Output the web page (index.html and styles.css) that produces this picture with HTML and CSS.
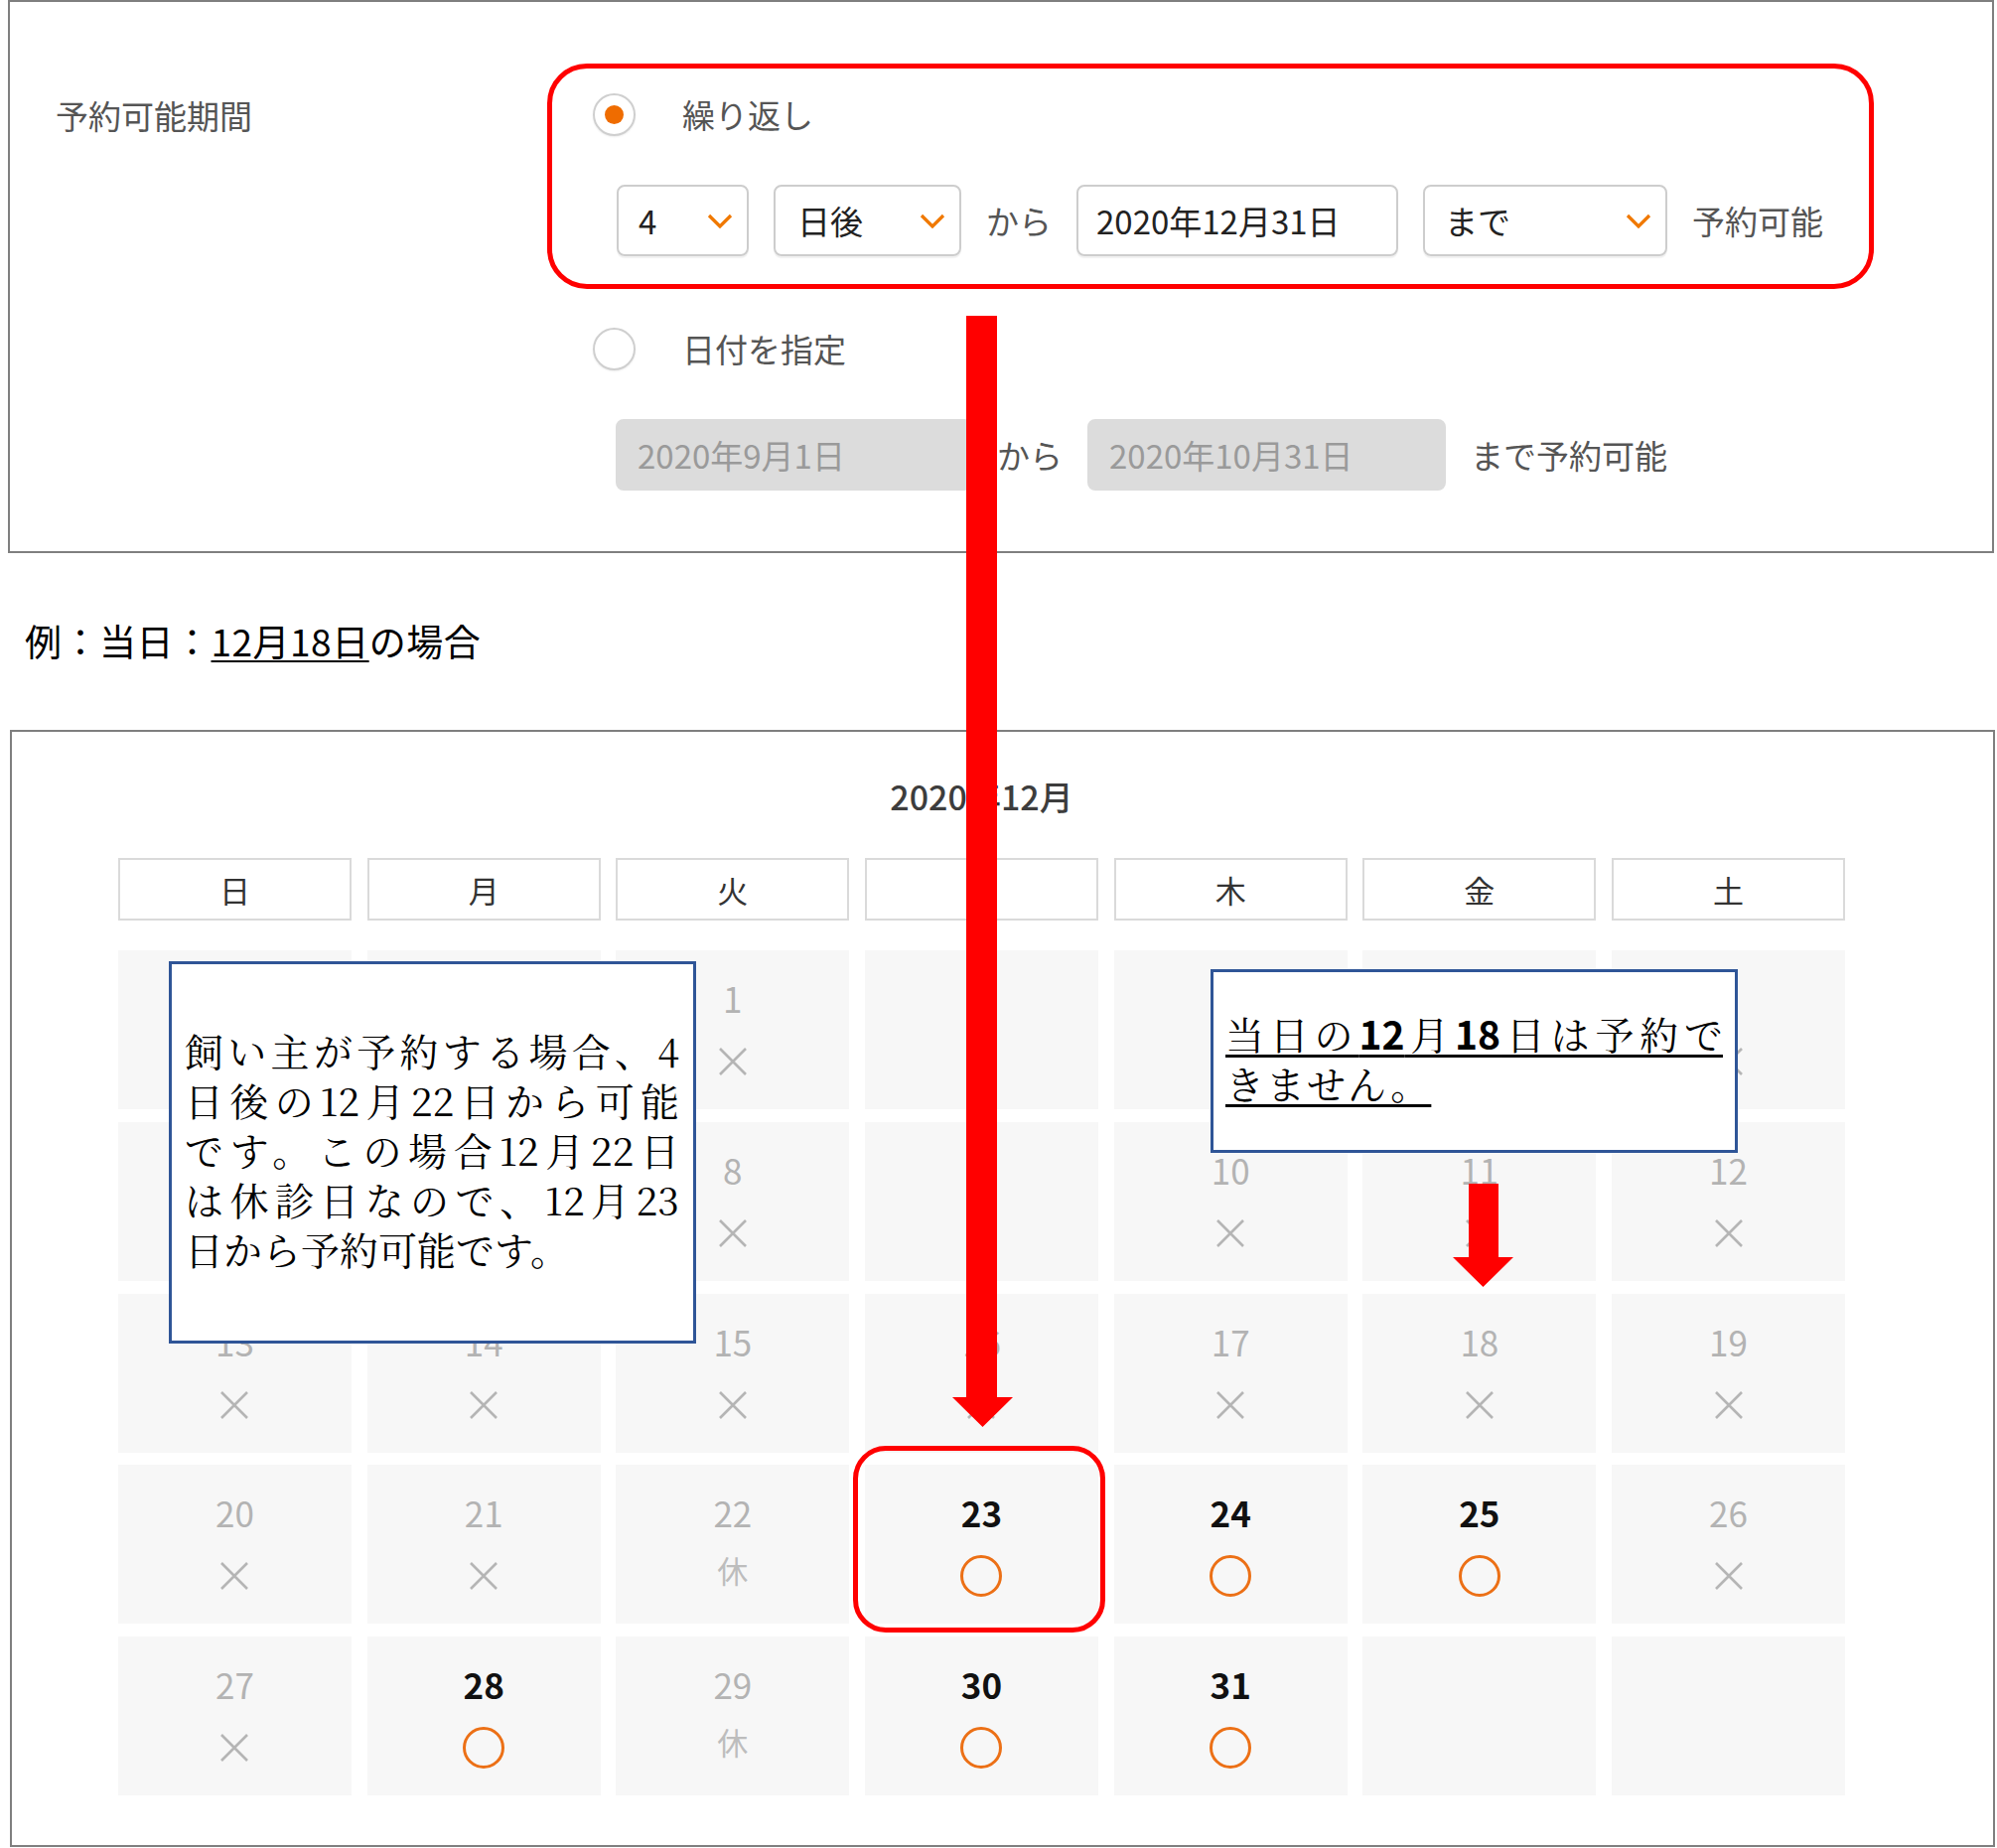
FILE: index.html
```html
<!DOCTYPE html>
<html lang="ja">
<head>
<meta charset="utf-8">
<title>予約可能期間</title>
<link rel="stylesheet" href="styles.css">
</head>
<body>
<div class="page">
  <section class="period-panel">
    <div class="field-label">予約可能期間</div>
    <div class="options">
      <div class="radio-row">
        <span class="radio checked"></span><span class="radio-text">繰り返し</span>
      </div>
      <div class="control-row r1">
        <div class="select w-num"><span>4</span><svg class="chev" viewBox="0 0 26 15"><path d="M2 2L13 13L24 2"/></svg></div>
        <div class="select w-unit"><span>日後</span><svg class="chev" viewBox="0 0 26 15"><path d="M2 2L13 13L24 2"/></svg></div>
        <span class="ctext">から</span>
        <div class="input w-date">2020年12月31日</div>
        <div class="select w-until"><span>まで</span><svg class="chev" viewBox="0 0 26 15"><path d="M2 2L13 13L24 2"/></svg></div>
        <span class="ctext">予約可能</span>
      </div>
      <div class="radio-row second">
        <span class="radio"></span><span class="radio-text">日付を指定</span>
      </div>
      <div class="control-row r2">
        <div class="input disabled w-d1">2020年9月1日</div>
        <span class="ctext">から</span>
        <div class="input disabled w-d2">2020年10月31日</div>
        <span class="ctext">まで予約可能</span>
      </div>
    </div>
  </section>

  <p class="example">例：当日：<u>12月18日</u>の場合</p>

  <section class="calendar-panel">
    <h2 class="cal-title">2020年12月</h2>
    <div class="cal-head">
      <div>日</div><div>月</div><div>火</div><div>水</div><div>木</div><div>金</div><div>土</div>
    </div>
    <div class="cal-days">
      <div class="day"></div>
      <div class="day"></div>
      <div class="day"><span class="num">1</span><span class="mark"><svg class="x" viewBox="0 0 30 30"><path d="M2 2L28 28M28 2L2 28"/></svg></span></div>
      <div class="day"><span class="num">2</span><span class="mark"><svg class="x" viewBox="0 0 30 30"><path d="M2 2L28 28M28 2L2 28"/></svg></span></div>
      <div class="day"><span class="num">3</span><span class="mark"><svg class="x" viewBox="0 0 30 30"><path d="M2 2L28 28M28 2L2 28"/></svg></span></div>
      <div class="day"><span class="num">4</span><span class="mark"><svg class="x" viewBox="0 0 30 30"><path d="M2 2L28 28M28 2L2 28"/></svg></span></div>
      <div class="day"><span class="num">5</span><span class="mark"><svg class="x" viewBox="0 0 30 30"><path d="M2 2L28 28M28 2L2 28"/></svg></span></div>

      <div class="day"><span class="num">6</span><span class="mark"><svg class="x" viewBox="0 0 30 30"><path d="M2 2L28 28M28 2L2 28"/></svg></span></div>
      <div class="day"><span class="num">7</span><span class="mark"><svg class="x" viewBox="0 0 30 30"><path d="M2 2L28 28M28 2L2 28"/></svg></span></div>
      <div class="day"><span class="num">8</span><span class="mark"><svg class="x" viewBox="0 0 30 30"><path d="M2 2L28 28M28 2L2 28"/></svg></span></div>
      <div class="day"><span class="num">9</span><span class="mark"><svg class="x" viewBox="0 0 30 30"><path d="M2 2L28 28M28 2L2 28"/></svg></span></div>
      <div class="day"><span class="num">10</span><span class="mark"><svg class="x" viewBox="0 0 30 30"><path d="M2 2L28 28M28 2L2 28"/></svg></span></div>
      <div class="day"><span class="num">11</span><span class="mark"><svg class="x" viewBox="0 0 30 30"><path d="M2 2L28 28M28 2L2 28"/></svg></span></div>
      <div class="day"><span class="num">12</span><span class="mark"><svg class="x" viewBox="0 0 30 30"><path d="M2 2L28 28M28 2L2 28"/></svg></span></div>

      <div class="day"><span class="num">13</span><span class="mark"><svg class="x" viewBox="0 0 30 30"><path d="M2 2L28 28M28 2L2 28"/></svg></span></div>
      <div class="day"><span class="num">14</span><span class="mark"><svg class="x" viewBox="0 0 30 30"><path d="M2 2L28 28M28 2L2 28"/></svg></span></div>
      <div class="day"><span class="num">15</span><span class="mark"><svg class="x" viewBox="0 0 30 30"><path d="M2 2L28 28M28 2L2 28"/></svg></span></div>
      <div class="day"><span class="num">16</span><span class="mark"><svg class="x" viewBox="0 0 30 30"><path d="M2 2L28 28M28 2L2 28"/></svg></span></div>
      <div class="day"><span class="num">17</span><span class="mark"><svg class="x" viewBox="0 0 30 30"><path d="M2 2L28 28M28 2L2 28"/></svg></span></div>
      <div class="day"><span class="num">18</span><span class="mark"><svg class="x" viewBox="0 0 30 30"><path d="M2 2L28 28M28 2L2 28"/></svg></span></div>
      <div class="day"><span class="num">19</span><span class="mark"><svg class="x" viewBox="0 0 30 30"><path d="M2 2L28 28M28 2L2 28"/></svg></span></div>

      <div class="day"><span class="num">20</span><span class="mark"><svg class="x" viewBox="0 0 30 30"><path d="M2 2L28 28M28 2L2 28"/></svg></span></div>
      <div class="day"><span class="num">21</span><span class="mark"><svg class="x" viewBox="0 0 30 30"><path d="M2 2L28 28M28 2L2 28"/></svg></span></div>
      <div class="day"><span class="num">22</span><span class="mark rest">休</span></div>
      <div class="day ok"><span class="num">23</span><span class="mark"><svg class="o" viewBox="0 0 42 42"><circle cx="21" cy="21" r="19.5"/></svg></span></div>
      <div class="day ok"><span class="num">24</span><span class="mark"><svg class="o" viewBox="0 0 42 42"><circle cx="21" cy="21" r="19.5"/></svg></span></div>
      <div class="day ok"><span class="num">25</span><span class="mark"><svg class="o" viewBox="0 0 42 42"><circle cx="21" cy="21" r="19.5"/></svg></span></div>
      <div class="day"><span class="num">26</span><span class="mark"><svg class="x" viewBox="0 0 30 30"><path d="M2 2L28 28M28 2L2 28"/></svg></span></div>

      <div class="day"><span class="num">27</span><span class="mark"><svg class="x" viewBox="0 0 30 30"><path d="M2 2L28 28M28 2L2 28"/></svg></span></div>
      <div class="day ok"><span class="num">28</span><span class="mark"><svg class="o" viewBox="0 0 42 42"><circle cx="21" cy="21" r="19.5"/></svg></span></div>
      <div class="day"><span class="num">29</span><span class="mark rest">休</span></div>
      <div class="day ok"><span class="num">30</span><span class="mark"><svg class="o" viewBox="0 0 42 42"><circle cx="21" cy="21" r="19.5"/></svg></span></div>
      <div class="day ok"><span class="num">31</span><span class="mark"><svg class="o" viewBox="0 0 42 42"><circle cx="21" cy="21" r="19.5"/></svg></span></div>
      <div class="day"></div>
      <div class="day"></div>
    </div>
  </section>

  <div class="note note-a">
    <div class="jl">飼い主が予約する場合、4</div>
    <div class="jl">日後の12月22日から可能</div>
    <div class="jl">です。この場合12月22日</div>
    <div class="jl">は休診日なので、12月23</div>
    <div class="last">日から予約可能です。</div>
  </div>

  <div class="note note-b">
    <div class="jl ul">当日の<b>12</b>月<b>18</b>日は予約で</div>
    <div class="ul last2">きません。</div>
  </div>

  <div class="hl-box hl-repeat"></div>
  <div class="hl-box hl-day"></div>

  <svg class="arrow arrow-main" viewBox="0 0 61 1119"><polygon points="14,0 45,0 45,1089 61,1089 30.5,1119 0,1089 14,1089"/></svg>
  <svg class="arrow arrow-small" viewBox="0 0 61 104"><polygon points="16,0 46,0 46,74 61,74 30.5,104 0,74 16,74"/></svg>
</div>
</body>
</html>
```

FILE: styles.css
```css
html, body {
  margin: 0;
  padding: 0;
  background: #ffffff;
}

body {
  font-family: "Noto Sans CJK JP", "Noto Sans", sans-serif;
}

.page {
  position: relative;
  width: 2011px;
  height: 1861px;
  overflow: hidden;
}

/* ---------- period panel ---------- */
.period-panel {
  box-sizing: border-box;
  margin-left: 8px;
  width: 2000px;
  height: 557px;
  border: 2px solid #7f7f7f;
  padding-left: 46px;
  display: flex;
}

.field-label {
  width: 541px;
  flex: none;
  padding-top: 92px;
  font-size: 33px;
  line-height: 44px;
  color: #555555;
}

.options {
  padding-top: 91px;
  display: flex;
  flex-direction: column;
}

.radio-row {
  display: flex;
  align-items: center;
  height: 44px;
}

.radio-row.second {
  margin-top: 71px;
}

.radio {
  box-sizing: border-box;
  width: 43px;
  height: 43px;
  border: 2px solid #cfcfcf;
  border-radius: 50%;
  display: flex;
  align-items: center;
  justify-content: center;
  box-shadow: 0 1px 2px rgba(0, 0, 0, 0.08);
}

.radio.checked::after {
  content: "";
  width: 19px;
  height: 19px;
  border-radius: 50%;
  background: #ef6c00;
}

.radio-text {
  margin-left: 47px;
  font-size: 33px;
  line-height: 44px;
  color: #555555;
}

.control-row {
  display: flex;
  align-items: center;
  gap: 25px;
  height: 72px;
  margin-left: 24px;
}

.control-row.r1 {
  margin-top: 49px;
}

.control-row.r2 {
  margin-top: 49px;
  margin-left: 23px;
}

.ctext {
  font-size: 33px;
  color: #555555;
  white-space: nowrap;
}

.select,
.input {
  box-sizing: border-box;
  height: 72px;
  border: 2px solid #cdcdcd;
  border-radius: 8px;
  display: flex;
  align-items: center;
  font-size: 33px;
  color: #222222;
  padding-left: 20px;
  box-shadow: 0 2px 1px rgba(0, 0, 0, 0.06);
  white-space: nowrap;
}

.select {
  justify-content: space-between;
  padding-right: 14px;
}

.input.disabled {
  background: #dcdcdc;
  border-color: #dcdcdc;
  color: #9a9a9a;
  box-shadow: none;
}

.w-num { width: 133px; }
.w-unit { width: 189px; padding-left: 22px; }
.w-date { width: 324px; padding-left: 18px; }
.w-until { width: 246px; }
.w-d1 { width: 359px; }
.w-d2 { width: 361px; }

.chev {
  width: 26px;
  height: 15px;
  fill: none;
  stroke: #f07800;
  stroke-width: 3.2;
}

/* ---------- example text ---------- */
.example {
  margin: 63px 0 0 25px;
  font-size: 37px;
  line-height: 50px;
  color: #000000;
  letter-spacing: 0.5px;
}

.example u {
  text-decoration-thickness: 2px;
  text-underline-offset: 4px;
}

/* ---------- calendar ---------- */
.calendar-panel {
  box-sizing: border-box;
  margin: 65px 0 0 10px;
  width: 1999px;
  height: 1125px;
  border: 2px solid #7f7f7f;
  padding: 40px 0 0 107px;
}

.cal-title {
  margin: 0;
  width: 1739px;
  text-align: center;
  font-size: 34px;
  line-height: 50px;
  font-weight: 500;
  color: #3d3d3d;
}

.cal-head,
.cal-days {
  width: 1739px;
  display: grid;
  grid-template-columns: repeat(7, 1fr);
  column-gap: 15.7px;
}

.cal-head {
  margin-top: 37px;
}

.cal-head div {
  box-sizing: border-box;
  height: 63px;
  border: 2px solid #dadada;
  display: flex;
  align-items: center;
  justify-content: center;
  font-size: 31px;
  color: #333333;
}

.cal-days {
  margin-top: 30px;
  grid-auto-rows: 160px;
  row-gap: 12.75px;
}

.day {
  box-sizing: border-box;
  background: #f7f7f7;
  display: flex;
  flex-direction: column;
  align-items: center;
  padding-top: 28px;
}

.num {
  font-size: 35px;
  line-height: 40px;
  color: #b3b3b3;
}

.day.ok .num {
  color: #111111;
  font-weight: 700;
}

.mark {
  height: 50px;
  margin-top: 19px;
  display: flex;
  align-items: center;
  justify-content: center;
}

.mark.rest {
  font-size: 31px;
  color: #bdbdbd;
  transform: translateY(-7px);
}

.x {
  width: 30px;
  height: 30px;
  fill: none;
  stroke: #b5b5b5;
  stroke-width: 2.6;
}

.o {
  width: 42px;
  height: 42px;
  fill: none;
  stroke: #ec7016;
  stroke-width: 3;
}

/* ---------- annotations ---------- */
.note {
  position: absolute;
  box-sizing: border-box;
  border: 3px solid #2f5597;
  background: #ffffff;
  font-family: "Noto Serif CJK JP", "Noto Sans CJK JP", serif;
  color: #000000;
  font-size: 39px;
  line-height: 50px;
}

.note-a {
  left: 170px;
  top: 968px;
  width: 531px;
  height: 385px;
  padding: 61px 14px 0 13px;
}

.note-b {
  left: 1219px;
  top: 976px;
  width: 531px;
  height: 185px;
  padding: 36px 12px 0 12px;
}

.jl {
  text-align: justify;
  text-align-last: justify;
  white-space: nowrap;
}

.last {
  white-space: nowrap;
}

.ul {
  text-decoration: underline;
  text-decoration-thickness: 3px;
  text-underline-offset: 5px;
}

.last2 {
  display: inline-block;
  letter-spacing: 2px;
}

.note-b b {
  font-family: "Noto Sans CJK JP", sans-serif;
  font-weight: 700;
}

.hl-box {
  position: absolute;
  box-sizing: border-box;
  border: 5px solid #ff0000;
}

.hl-repeat {
  left: 551px;
  top: 64px;
  width: 1336px;
  height: 227px;
  border-radius: 40px;
}

.hl-day {
  left: 859px;
  top: 1456px;
  width: 254px;
  height: 188px;
  border-radius: 33px;
}

.arrow {
  position: absolute;
  fill: #ff0000;
}

.arrow-main {
  left: 959px;
  top: 318px;
  width: 61px;
  height: 1119px;
}

.arrow-small {
  left: 1463px;
  top: 1192px;
  width: 61px;
  height: 104px;
}
```
